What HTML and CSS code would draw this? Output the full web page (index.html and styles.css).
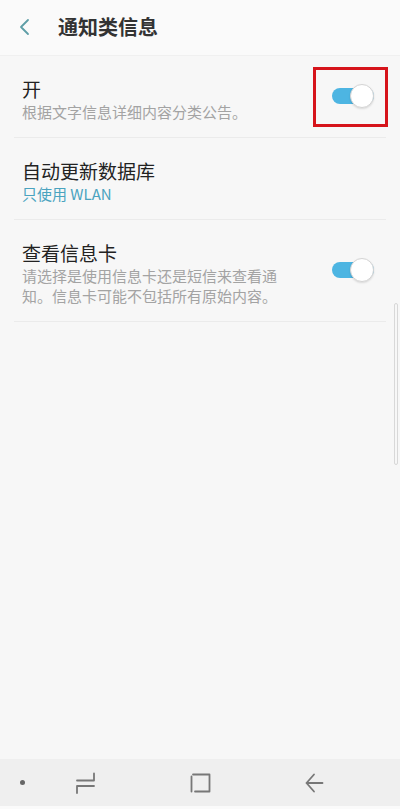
FILE: index.html
```html
<!DOCTYPE html>
<html lang="zh">
<head>
	<meta charset="UTF-8">
	<meta name="viewport" content="width=device-width, initial-scale=1.0">
	<title>通知类信息</title>
	<link rel="stylesheet" href="styles.css">
</head>
<body>
	<div class="screen">
		<div class="header">
			<svg class="back" width="14" height="18" viewBox="0 0 14 18">
				<path d="M10 2 L3 9 L10 16" fill="none" stroke="#5e9ea7" stroke-width="1.8" stroke-linecap="round" stroke-linejoin="round"/>
			</svg>
			<span class="title">通知类信息</span>
		</div>

		<ul class="list">
			<li class="item">
				<div class="text">
					<div class="name">开</div>
					<div class="desc">根据文字信息详细内容分类公告。</div>
				</div>
				<div class="switch on">
					<span class="thumb"></span>
					<span class="mark"></span>
				</div>
			</li>
			<li class="item">
				<div class="text">
					<div class="name">自动更新数据库</div>
					<div class="desc link">只使用 WLAN</div>
				</div>
			</li>
			<li class="item">
				<div class="text">
					<div class="name">查看信息卡</div>
					<div class="desc">请选择是使用信息卡还是短信来查看通知。信息卡可能不包括所有原始内容。</div>
				</div>
				<div class="switch on">
					<span class="thumb"></span>
				</div>
			</li>
		</ul>

		<div class="scroll"></div>

		<div class="navbar">
			<span class="dot"></span>
			<svg class="nav-icon" width="24" height="24" viewBox="0 0 24 24">
				<path d="M4 9.5 H21 V2.5 M21 15 H4 V22" fill="none" stroke="#777" stroke-width="1.8" stroke-linecap="round" stroke-linejoin="round"/>
			</svg>
			<svg class="nav-icon" width="24" height="24" viewBox="0 0 24 24">
				<path d="M5 3.5 H21.5 V20.5 H7 M3.5 5.5 V20.5" fill="none" stroke="#777" stroke-width="1.8" stroke-linecap="round" stroke-linejoin="round"/>
			</svg>
			<svg class="nav-icon" width="24" height="24" viewBox="0 0 24 24">
				<path d="M11 3.5 L3.5 12 L11 20.5 M3.5 12 H19.5" fill="none" stroke="#777" stroke-width="1.8" stroke-linecap="round" stroke-linejoin="round"/>
			</svg>
		</div>
	</div>
</body>
</html>
```

FILE: styles.css
```css
*{padding: 0;margin: 0;box-sizing: border-box;}
body{
	font-family: "Noto Sans CJK SC", "Noto Sans", sans-serif;
	background-color: #f7f7f7;
}
.screen{
	width: 400px;
	height: 809px;
	position: relative;
	display: flex;
	flex-direction: column;
	background-color: #f7f7f7;
}
.header{
	height: 56px;
	display: flex;
	align-items: center;
	background-color: #fafafa;
	border-bottom: 1px solid #f0f0f0;
	padding-left: 18px;
}
.back{
	margin-right: 26px;
	margin-top: -2px;
}
.title{
	font-size: 20px;
	font-weight: bold;
	color: #333;
	margin-top: -2px;
}
.list{
	list-style: none;
	flex: 1;
}
.item{
	margin: 0 14px;
	padding: 20px 12px 15px 8px;
	display: flex;
	align-items: center;
	justify-content: space-between;
	border-bottom: 1px solid #ebebeb;
}
.text{
	width: 262px;
}
.name{
	font-size: 19px;
	line-height: 26px;
	color: #222;
}
.desc{
	font-size: 15px;
	line-height: 20px;
	color: #a3a3a3;
}
.desc.link{
	color: #4aa3bf;
}
.switch{
	width: 42px;
	height: 16px;
	border-radius: 8px;
	background-color: #4db5e2;
	position: relative;
	margin-top: -6px;
}
.thumb{
	position: absolute;
	right: 0;
	top: -4px;
	width: 24px;
	height: 24px;
	border-radius: 100%;
	background-color: #fff;
	border: 1px solid #d4d4d4;
	box-shadow: 0 1px 2px rgba(0,0,0,0.12);
}
.mark{
	position: absolute;
	left: -19px;
	right: -14px;
	top: -21px;
	bottom: -23px;
	border: 3px solid #d6141b;
}
.scroll{
	position: absolute;
	left: 394px;
	top: 303px;
	width: 4px;
	height: 162px;
	border: 1px solid #d8d8d8;
	border-radius: 2px;
}
.navbar{
	height: 50px;
	background-color: #efefef;
	border-bottom: 3px solid #fafafa;
	display: flex;
	align-items: center;
	position: relative;
}
.dot{
	width: 5px;
	height: 5px;
	border-radius: 100%;
	background-color: #666;
	margin-left: 20px;
	margin-right: 48px;
}
.nav-icon:nth-of-type(1){
	margin-right: 91px;
}
.nav-icon:nth-of-type(2){
	margin-right: 91px;
}
```
